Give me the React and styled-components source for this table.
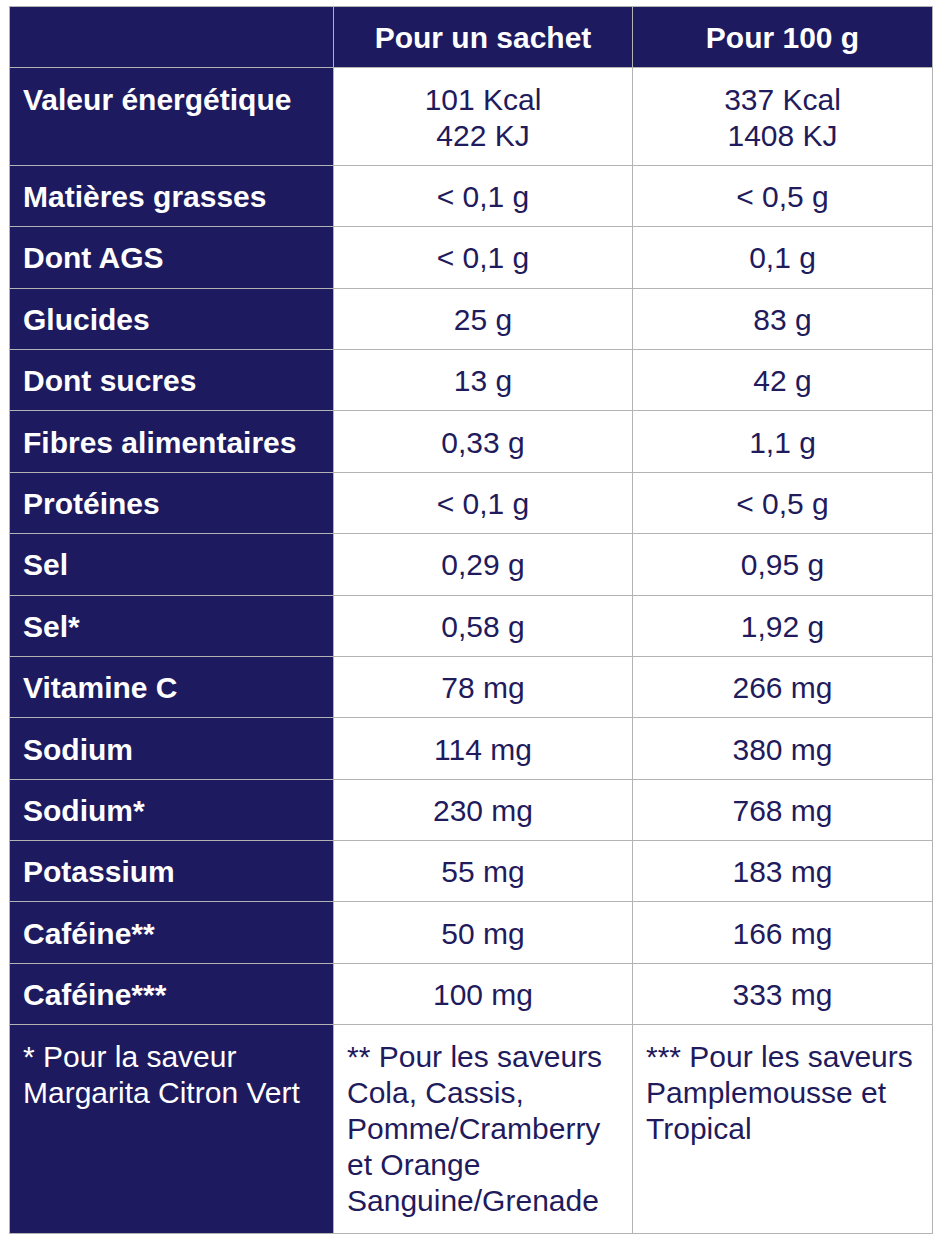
import React from "react";
import styled, { createGlobalStyle } from "styled-components";

const rows = [
  ["Valeur énergétique", ["101 Kcal", "422 KJ"], ["337 Kcal", "1408 KJ"]],
  ["Matières grasses", ["< 0,1 g"], ["< 0,5 g"]],
  ["Dont AGS", ["< 0,1 g"], ["0,1 g"]],
  ["Glucides", ["25 g"], ["83 g"]],
  ["Dont sucres", ["13 g"], ["42 g"]],
  ["Fibres alimentaires", ["0,33 g"], ["1,1 g"]],
  ["Protéines", ["< 0,1 g"], ["< 0,5 g"]],
  ["Sel", ["0,29 g"], ["0,95 g"]],
  ["Sel*", ["0,58 g"], ["1,92 g"]],
  ["Vitamine C", ["78 mg"], ["266 mg"]],
  ["Sodium", ["114 mg"], ["380 mg"]],
  ["Sodium*", ["230 mg"], ["768 mg"]],
  ["Potassium", ["55 mg"], ["183 mg"]],
  ["Caféine**", ["50 mg"], ["166 mg"]],
  ["Caféine***", ["100 mg"], ["333 mg"]],
];

const GlobalStyle = createGlobalStyle`
  body {
    margin: 0;
    padding: 6px 9px;
    background: #ffffff;
    font-family: "Liberation Sans", Arial, sans-serif;
  }
`;

const Table = styled.table`
  width: 923px;
  border-collapse: collapse;
  table-layout: fixed;
  font-size: 30px;
  line-height: 36px;
`;

const Cell = styled.td`
  border: 1px solid #b3b3b3;
  padding: 13.3px 13px 11.1px;
  vertical-align: top;
`;

const HeadCell = styled(Cell).attrs({ as: "th" })`
  background: #1e1a60;
  color: #ffffff;
  font-weight: bold;
  text-align: center;
`;

const LabelCell = styled(Cell)`
  background: #1e1a60;
  color: #ffffff;
  font-weight: bold;
  text-align: left;
`;

const ValueCell = styled(Cell)`
  color: #1f1b5c;
  text-align: center;
`;

const NoteCell = styled(Cell)`
  background: ${(p) => (p.$dark ? "#1e1a60" : "#ffffff")};
  color: ${(p) => (p.$dark ? "#ffffff" : "#1f1b5c")};
  text-align: left;
  padding-bottom: 14px;
`;

const Lines = ({ items }) =>
  items.map((t, i) => (
    <React.Fragment key={i}>
      {i > 0 && <br />}
      {t}
    </React.Fragment>
  ));

const App = () => {
  return (
    <>
      <GlobalStyle />
      <Table>
        <colgroup>
          <col style={{ width: "324px" }} />
          <col style={{ width: "299px" }} />
          <col style={{ width: "300px" }} />
        </colgroup>
        <thead>
          <tr>
            <HeadCell />
            <HeadCell>Pour un sachet</HeadCell>
            <HeadCell>Pour 100 g</HeadCell>
          </tr>
        </thead>
        <tbody>
          {rows.map(([label, a, b]) => (
            <tr key={label}>
              <LabelCell>{label}</LabelCell>
              <ValueCell>
                <Lines items={a} />
              </ValueCell>
              <ValueCell>
                <Lines items={b} />
              </ValueCell>
            </tr>
          ))}
          <tr>
            <NoteCell $dark>
              <Lines items={["* Pour la saveur", "Margarita Citron Vert"]} />
            </NoteCell>
            <NoteCell>
              <Lines
                items={[
                  "** Pour les saveurs",
                  "Cola, Cassis,",
                  "Pomme/Cramberry",
                  "et Orange",
                  "Sanguine/Grenade",
                ]}
              />
            </NoteCell>
            <NoteCell>
              <Lines
                items={["*** Pour les saveurs", "Pamplemousse et", "Tropical"]}
              />
            </NoteCell>
          </tr>
        </tbody>
      </Table>
    </>
  );
};

export default App;
